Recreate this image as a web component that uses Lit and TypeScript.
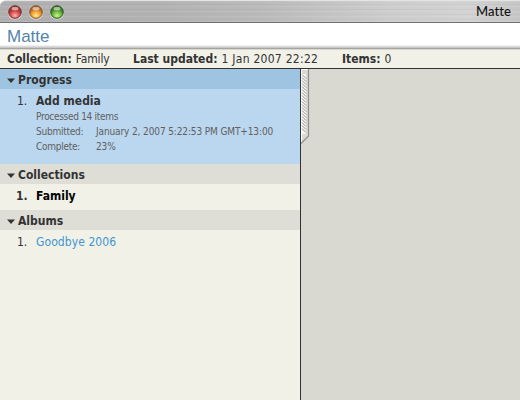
import { LitElement, html, css, svg } from "lit";
import { customElement } from "lit/decorators.js";

const lights = [
  { x: 15, id: "r", dark: "#802628", mid: "#d2484a", lite: "#ffb4ae" },
  { x: 36, id: "y", dark: "#8c5020", mid: "#ef9a35", lite: "#fff08a" },
  { x: 57, id: "g", dark: "#2c581c", mid: "#62b238", lite: "#ccf58c" },
];

@customElement("app-root")
export class AppRoot extends LitElement {
  static styles = css`
    :host { display: flex; flex-direction: column; width: 520px; height: 400px; overflow: hidden;
      font: 12px/15px "DejaVu Sans Condensed", "DejaVu Sans", sans-serif; font-stretch: condensed;
      color: #333; background: #fff; white-space: nowrap; }
    * { box-sizing: border-box; }
    .title { height: 23px; flex: none; display: flex; justify-content: space-between; align-items: center;
      border-bottom: 1px solid #707070; border-top: 1px solid #e4e4e4; border-top-left-radius: 6px;
      background: repeating-linear-gradient(180deg, rgba(255,255,255,.08) 0 1px, transparent 1px 3px, rgba(0,0,0,.025) 3px 4px, transparent 4px 5px),
        linear-gradient(90deg, #b0b0b0, #b2b2b2 30%, #bababa 50%, #cdcdcd 75%, #d2d2d2 90%, #c6c6c6); }
    .title svg { display: block; }
    .name { font-family: "Lato", sans-serif; font-size: 13px; font-stretch: normal; font-weight: 500; color: #111; padding-right: 9px; letter-spacing: .1px; }
    .brand { height: 27px; flex: none; padding: 4px 0 0 7px; font: 17px/20px "Liberation Sans", sans-serif; color: #5584a8;
      background: linear-gradient(180deg, #fff 22px, #f0f0f0 22px 23px, #dcdcdc 23px 24px, #c8c8c8 24px 25px, #a4a4a0 25px 26px, #d8d8d0 26px); }
    .info { height: 19px; flex: none; display: flex; padding: 2px 7px 0; background: #f1f1e8; border-bottom: 1px solid #333; }
    .info div { display: flex; }
    .info b { margin-right: 4px; }
    .c1 { width: 126px; } .c2 { width: 209px; }
    .c1 span { letter-spacing: -.15px; }
    .c2 span { letter-spacing: .27px; }
    .body { flex: 1; display: flex; min-height: 0; }
    .side { width: 301px; border-right: 1px solid #333; background: #f1f1e8; }
    .main { flex: 1; background: #d9d9d1; }
    .main svg { display: block; }
    h2 { margin: 0; height: 20px; display: flex; align-items: center; gap: 3px; padding: 3px 0 0 7px; font-size: 12px; line-height: 15px; background: #deded7; }
    .busy h2 { background: #9fc4e1; }
    .busy { height: 95px; background: #bad7ef; }
    .row { height: 26px; display: flex; padding: 5px 0 0 17px; }
    .row i { font-style: normal; width: 19px; flex: none; }
    .busy .row { height: 20px; }
    .bold { font-weight: bold; color: #000; }
    .bold i { color: #333; margin-left: -1px; width: 20px; }
    .link { color: #4295d1; letter-spacing: .08px; }
    .detail { font-size: 10px; line-height: 15px; padding-left: 36px; color: #606060; display: flex; letter-spacing: -.12px; }
    .detail span { width: 60px; letter-spacing: -.25px; }
    .processed { letter-spacing: -.3px; }
  `;

  private head(text: string) {
    return html`<h2><svg width="8" height="6" viewBox="0 0 8 6"><path d="M0 .5H8L4 5Z" fill="#333"/></svg>${text}</h2>`;
  }

  render() {
    const hatch = Array.from({ length: 19 }, (_, i) => 5.5 + i * 3);
    return html`
      <div class="title">
        <svg width="70" height="21" viewBox="0 1 70 21">
          <defs>${lights.map((l) => svg`
            <radialGradient id=${l.id} cx=".5" cy=".8" r=".7">
              <stop offset="0" stop-color=${l.lite}/><stop offset=".55" stop-color=${l.mid}/><stop offset="1" stop-color=${l.dark}/>
            </radialGradient>`)}</defs>
          ${lights.map((l) => svg`
            <circle cx=${l.x} cy="12.6" r="7.2" fill="#d9d9d9"/>
            <circle cx=${l.x} cy="12" r="6.3" fill="url(#${l.id})" stroke=${l.dark} stroke-width="1"/>
            <ellipse cx=${l.x} cy="8.5" rx="3.6" ry="1.8" fill="#fff" opacity=".55"/>`)}
        </svg>
        <span class="name">Matte</span>
      </div>
      <div class="brand">Matte</div>
      <div class="info">
        <div class="c1"><b>Collection:</b><span>Family</span></div>
        <div class="c2"><b>Last updated:</b><span>1 Jan 2007 22:22</span></div>
        <div><b>Items:</b><span>0</span></div>
      </div>
      <div class="body">
        <div class="side">
          <div class="busy">
            ${this.head("Progress")}
            <div class="row"><i>1.</i><b>Add media</b></div>
            <div class="detail processed">Processed 14 items</div>
            <div class="detail"><span>Submitted:</span>January 2, 2007 5:22:53 PM GMT+13:00</div>
            <div class="detail"><span>Complete:</span>23%</div>
          </div>
          ${this.head("Collections")}
          <div class="row bold"><i>1.</i>Family</div>
          ${this.head("Albums")}
          <div class="row"><i>1.</i><span class="link">Goodbye 2006</span></div>
        </div>
        <div class="main">
          <svg width="9" height="76" viewBox="0 0 9 76">
            <path d="M0 0H8V67L0 75Z" fill="#d9d9d1"/>
            <path d="M.5 73V.5H7" fill="none" stroke="#fff"/>
            <path d="M1 5H5V65H1Z" fill="#f2f2ee"/>
            ${hatch.map((y) => svg`<path d="M1 ${y}l4 4" stroke="#8c8c88" stroke-width=".9"/>`)}
            <path d="M7.5 0V67L0 74.5" fill="none" stroke="#8f8f8b" stroke-width="1.2"/>
          </svg>
        </div>
      </div>`;
  }
}
